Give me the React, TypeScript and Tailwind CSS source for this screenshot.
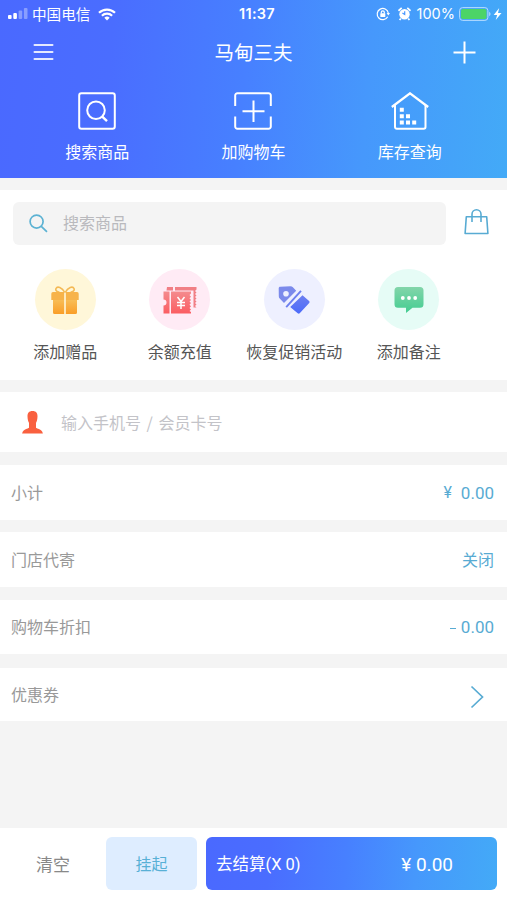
import React from "react";

// ---------------- types ----------------
type Entry = {
  label: string;
  icon: React.ReactNode;
};

type Promo = Entry & { bg: string };

type Row = {
  label: string;
  value: React.ReactNode;
  className: string;
};

// ---------------- header icons ----------------
const SearchBox = () => (
  <svg width="38" height="38" viewBox="0 0 38 38" fill="none" stroke="#fff" strokeWidth="2">
    <rect x="1.2" y="1.2" width="35.6" height="35.6" rx="2.2" />
    <circle cx="18" cy="18.2" r="8.8" />
    <path d="M24 24.4l5 4.8" strokeWidth="2.4" />
  </svg>
);

const AddBox = () => (
  <svg width="38" height="38" viewBox="0 0 38 38" fill="none" stroke="#fff" strokeWidth="2">
    <path d="M1.2 14V3.4a2.2 2.2 0 0 1 2.2-2.2h31.2a2.2 2.2 0 0 1 2.2 2.2V14" />
    <path d="M1.2 24.5v10.1a2.2 2.2 0 0 0 2.2 2.2h31.2a2.2 2.2 0 0 0 2.2-2.2V24.5" />
    <path d="M19.5 8.5v21.5M8.5 19.3h22" />
  </svg>
);

const House = () => (
  <svg width="38" height="38" viewBox="0 0 38 38" fill="none" stroke="#fff" strokeWidth="2">
    <path d="M.8 15L19 1.3 37.2 15" strokeWidth="2.2" />
    <path d="M4 13v22a1.8 1.8 0 0 0 1.8 1.8h26.9a1.8 1.8 0 0 0 1.8-1.8V13" />
    <path
      d="M8.8 15.8h4v4h-4zM8.8 22.2h4v4h-4zM15 22.2h4v4h-4zM8.8 28.6h4v4h-4zM15 28.6h4v4h-4zM21.2 28.6h4v4h-4z"
      fill="#fff"
      stroke="none"
    />
  </svg>
);

// ---------------- promo icons ----------------
const Gift = () => (
  <svg width="28" height="28" viewBox="0 0 28 28" fill="none">
    <defs>
      <linearGradient id="gift" x1="0" y1="0" x2="0" y2="1">
        <stop stopColor="#f8bd55" />
        <stop offset="1" stopColor="#fa9e28" />
      </linearGradient>
    </defs>
    <path d="M13.8 6.5C11 1 6.2-.2 5 2.5c-.9 2.2 1.5 3.5 3.5 3.7M14.2 6.5C17 1 21.8-.2 23 2.5c.9 2.2-1.5 3.5-3.5 3.7" stroke="#f4b955" strokeWidth="1.6" />
    <path d="M2 6h11.2v8H.3V7.7A1.7 1.7 0 0 1 2 6zM14.8 6H26a1.7 1.7 0 0 1 1.7 1.7V14H14.8z" fill="#f7b34a" />
    <path d="M2 14h11.2v14H3.5A1.5 1.5 0 0 1 2 26.5zM14.8 14H26v12.5a1.5 1.5 0 0 1-1.5 1.5h-9.7z" fill="url(#gift)" />
  </svg>
);

const Ticket = () => (
  <svg width="34" height="28" viewBox="0 0 34 28" fill="none">
    <defs>
      <linearGradient id="ticket" x1="0" y1="0" x2="0" y2="1">
        <stop stopColor="#f48b8e" />
        <stop offset="1" stopColor="#fb5d62" />
      </linearGradient>
    </defs>
    <path d="M4 1h6v3.5H3.5zM12 1h21.5v2.5L32 5l1.5 1.5L32 8l1.5 1.5L32 11l1.5 1.5L32 14l1.5 1.5L32 17l1.5 1.5L32 20l1.5 1.5h-3v-17H12z" fill="#f17f85" />
    <path d="M.5 5.5h6v22h-6v-8a3 3 0 0 0 0-6z" fill="url(#ticket)" />
    <path d="M8 5.5h20v2l-1.5 1.6 1.5 1.6-1.5 1.6 1.5 1.6-1.5 1.6 1.5 1.6-1.5 1.6 1.5 1.6-1.5 1.6 1.5 1.6-1.5 1.6 1.500 1v1.400H8z" fill="url(#ticket)" />
    <path d="M14.5 11l3.500 4.500 3.500-4.500M18 15.500V23M14 16.500h8M14 19.500h8" stroke="#fff" strokeWidth="1.500" />
  </svg>
);

const Tag = () => (
  <svg width="32" height="28" viewBox="0 0 32 28" fill="none">
    <defs>
      <linearGradient id="tag" x1="0" y1="0" x2="0" y2="1">
        <stop stopColor="#6c7ff0" />
        <stop offset="1" stopColor="#4c6bfa" />
      </linearGradient>
    </defs>
    <path
      d="M2.2.8L12.500.2c1 0 1.700.3 2.400 1L18.200 4.800 6 17 1.700 12.500C1 11.800.8 11 .8 10.200L.7 2.300c0-.9.6-1.500 1.500-1.500zM8 5a2.800 2.800 0 1 0 0 5.600A2.800 2.800 0 0 0 8 5z"
      fill="#7b8aeb"
      fillRule="evenodd"
    />
    <path d="M8.200 21.200L23 4.800" stroke="#6c7ff0" strokeWidth="1.900" />
    <path d="M24.500 9.200l6.600 5.800c.6.600.6 1.300.1 2L21.700 27.200c-.6.600-1.300.6-2 0l-7.500-6.200z" fill="url(#tag)" />
  </svg>
);

const Comment = () => (
  <svg width="30" height="28" viewBox="0 0 30 28" fill="none">
    <defs>
      <linearGradient id="comment" x1="0" y1="0" x2="0" y2="1">
        <stop stopColor="#83d5aa" />
        <stop offset="1" stopColor="#43cd91" />
      </linearGradient>
    </defs>
    <path d="M4 1h22a3.500 3.500 0 0 1 3.500 3.500v13.800a3.500 3.500 0 0 1-3.500 3.500h-7.500L12 27v-5.200H4a3.500 3.500 0 0 1-3.500-3.500V4.500A3.500 3.500 0 0 1 4 1z" fill="url(#comment)" />
    <circle cx="8.800" cy="12" r="1.900" fill="#fff" />
    <circle cx="15" cy="12" r="1.900" fill="#fff" />
    <circle cx="21.200" cy="12" r="1.900" fill="#fff" />
  </svg>
);

// ---------------- data ----------------
const entries: Entry[] = [
  { label: "搜索商品", icon: <SearchBox /> },
  { label: "加购物车", icon: <AddBox /> },
  { label: "库存查询", icon: <House /> },
];

const promos: Promo[] = [
  { label: "添加赠品", icon: <Gift />, bg: "bg-[#fff7d9]" },
  { label: "余额充值", icon: <Ticket />, bg: "bg-[#ffebf5]" },
  { label: "恢复促销活动", icon: <Tag />, bg: "bg-[#eef0ff]" },
  { label: "添加备注", icon: <Comment />, bg: "bg-[#e6fcf6]" },
];

const rows: Row[] = [
  {
    label: "小计",
    value: (
      <>
        <span className="mr-[9px] text-base">¥</span>0.00
      </>
    ),
    className: "mt-[13px] h-[55px]",
  },
  {
    label: "门店代寄",
    value: <span className="pt-[3px] text-base">关闭</span>,
    className: "mt-3 h-[55px]",
  },
  {
    label: "购物车折扣",
    value: (
      <>
        <span className="mr-[5px] mt-[2px] h-px w-[6px] bg-[#58abd3]" />0.00
      </>
    ),
    className: "mt-[13px] h-[54px]",
  },
  {
    label: "优惠券",
    value: (
      <svg className="mr-[10px] mt-1" width="14" height="24" viewBox="0 0 14 24" fill="none" stroke="#58abd3" strokeWidth="1.7">
        <path d="M1.5 1.5L12.500 12 1.500 22.500" />
      </svg>
    ),
    className: "mt-[14px] h-[53px]",
  },
];

// ---------------- sections ----------------
const StatusBar = () => (
  <div className="grid h-7 grid-cols-[1fr_auto_1fr] items-center pl-2 pr-1 text-white">
    <div className="flex items-center">
      <svg width="20" height="12" viewBox="0 0 20 12" fill="#fff">
        <rect x="0" y="7" width="3.6" height="4" rx="1" />
        <rect x="5.3" y="5" width="3.6" height="6" rx="1" />
        <rect x="10.6" y="2.5" width="3.6" height="8.5" rx="1" opacity=".35" />
        <rect x="15.9" y="0" width="3.6" height="11" rx="1" opacity=".35" />
      </svg>
      <span className="ml-1 text-[14.6px] leading-5">中国电信</span>
      <svg className="ml-2" width="18" height="13" viewBox="0 0 18 13" fill="none" stroke="#fff" strokeWidth="2.2">
        <path d="M1 4.800a11.500 11.500 0 0 1 16 0M3.900 7.800a7.300 7.300 0 0 1 10.200 0" />
        <path d="M9 12.500l-2.700-2.700a3.900 3.900 0 0 1 5.400 0z" fill="#fff" stroke="none" />
      </svg>
    </div>
    <span className="pl-[3px] font-[Inter] text-[14.5px] font-semibold leading-5 tracking-[0.3px]">11:37</span>
    <div className="flex items-center justify-end">
      <svg width="14" height="14" viewBox="0 0 14 14" fill="none" stroke="#fff" strokeWidth="1.2">
        <path d="M11.700 9.800A5.600 5.600 0 1 1 12.300 6" />
        <path d="M10.600 6h3.400l-1.700 2.400z" fill="#fff" stroke="none" />
        <rect x="4.300" y="6.300" width="5" height="3.600" rx=".5" fill="#fff" stroke="none" />
        <path d="M5.300 6.500V5.300a1.500 1.500 0 0 1 3 0v1.200" />
      </svg>
      <svg className="ml-2" width="13" height="14" viewBox="0 0 13 14" fill="#fff">
        <circle cx="6.500" cy="7.300" r="5.200" />
        <path d="M.5 3.800L3.700.9M12.500 3.800L9.300.9M2.800 11.500l-1.200 1.600M10.200 11.500l1.200 1.600" stroke="#fff" strokeWidth="1.700" />
        <path d="M6.700 4.200v3.300L4.400 6" fill="none" stroke="#4696ff" strokeWidth="1.200" />
      </svg>
      <span className="ml-[6px] font-[Inter] text-[14.5px] leading-5">100%</span>
      <svg className="ml-1" width="44" height="14" viewBox="0 0 44 14" fill="none">
        <rect x=".6" y=".6" width="28.300" height="12.800" rx="3" stroke="#b6dcff" strokeWidth="1" />
        <rect x="2" y="2" width="25.500" height="10" rx="1.800" fill="#4cd467" />
        <path d="M30.200 4.800c1.800.8 1.800 3.600 0 4.400z" fill="#b6dcff" />
        <path d="M40.200 1l-5.500 7h3.500l-1.500 5 5.800-7H39z" fill="#fff" />
      </svg>
    </div>
  </div>
);

const Header = () => (
  <header className="h-[178px] bg-[linear-gradient(95deg,#4a69ff_0%,#4a6dff_22%,#4780ff_48%,#4698fc_72%,#43aaf7_100%)] text-white">
    <StatusBar />
    <div className="flex h-12 items-center justify-between pl-8 pr-[31px]">
      <svg width="22" height="18" viewBox="0 0 22 18" stroke="#fff" strokeOpacity=".85" strokeWidth="2">
        <path d="M2.500 2h18M2.500 9h18M2.500 16h18" strokeLinecap="round" />
      </svg>
      <h1 className="text-[19.5px] leading-7">马甸三夫</h1>
      <svg width="23" height="23" viewBox="0 0 23 23" stroke="#fff" strokeWidth="2">
        <path d="M11.5.5v22M.5 11.5h22" />
      </svg>
    </div>
    <div className="grid grid-cols-3 px-[19px] pt-4">
      {entries.map(e => (
        <button key={e.label} className="flex flex-col items-center">
          {e.icon}
          <span className="mt-[9px] text-base leading-6">{e.label}</span>
        </button>
      ))}
    </div>
  </header>
);

// ---------------- page ----------------
const App: React.FC = () => {
  return (
    <div className="flex h-[900px] w-full flex-col bg-[#f4f4f4] font-['Noto_Sans_CJK_SC',sans-serif]">
      <Header />

      {/* search + promo actions */}
      <section className="mt-3 h-[190px] bg-white pt-3">
        <div className="flex h-[43px] items-center pl-[13px] pr-[18px]">
          <div className="flex h-full w-[433px] items-center rounded-md bg-[#f4f4f4] pl-4">
            <svg width="19" height="19" viewBox="0 0 19 19" fill="none" stroke="#5cb2d3" strokeWidth="1.7">
              <circle cx="7.6" cy="7.6" r="6.5" />
              <path d="M12.3 12.3l5.700 5.500" />
            </svg>
            <span className="ml-[15px] pb-[3px] text-base leading-6 text-[#b9b9bd]">搜索商品</span>
          </div>
          <svg className="mb-[5px] ml-auto" width="25" height="27" viewBox="0 0 25 27" fill="none" stroke="#58abd3" strokeWidth="1.6">
            <path d="M2.300 8.800h20.400L23.900 25.500H1.100z" strokeLinejoin="round" />
            <path d="M8 14V6.200a4.500 4.500 0 0 1 9 0V14" />
          </svg>
        </div>
        <div className="ml-2 mt-6 grid w-[458px] grid-cols-4">
          {promos.map(p => (
            <button key={p.label} className="flex flex-col items-center">
              <span className={`flex h-[61px] w-[61px] items-center justify-center rounded-full ${p.bg}`}>
                {p.icon}
              </span>
              <span className="mt-[9px] whitespace-nowrap text-base leading-6 text-[#555]">{p.label}</span>
            </button>
          ))}
        </div>
      </section>

      {/* member lookup */}
      <section className="mt-3 flex h-[60px] items-center bg-white pl-[22px]">
        <svg width="21" height="23" viewBox="0 0 21 23" fill="#f9603f">
          <path d="M10.5 0c3.700 0 5.100 2.200 5 5.500-.1 3.200-.8 5.400-2 7.300v3.400c.3.700 1.400 1.100 2.700 1.600 2.500.9 4.200 1.900 4.700 4.700H.1c.5-2.800 2.200-3.800 4.700-4.700 1.300-.5 2.400-.9 2.700-1.600v-3.400c-1.200-1.900-1.900-4.100-2-7.300C5.400 2.200 6.800 0 10.500 0z" />
          <path d="M7 12h7v6H7z" />
        </svg>
        <span className="ml-[18px] pb-px text-base leading-6 text-[#c3c3c8] [word-spacing:2px]">输入手机号 / 会员卡号</span>
      </section>

      {rows.map(r => (
        <section key={r.label} className={`flex items-center justify-between bg-white pl-[11px] pr-[13px] text-base ${r.className}`}>
          <span className="pb-[2px] leading-6 text-[#999]">{r.label}</span>
          <span className="flex items-center font-[Roboto,'Noto_Sans_CJK_SC',sans-serif] text-[17px] leading-6 text-[#58abd3]">
            {r.value}
          </span>
        </section>
      ))}

      {/* footer actions */}
      <footer className="mt-auto flex h-[72px] items-center bg-white pb-px pr-[10px]">
        <button className="w-[106px] text-[17px] leading-6 text-[#888]">清空</button>
        <button className="h-[53px] w-[91px] rounded-md bg-[#deedff] pb-px text-base text-[#58b0d6]">挂起</button>
        <button className="ml-[9px] flex h-[53px] flex-1 items-center justify-between rounded-md bg-[linear-gradient(95deg,#4a69ff_0%,#4a6dff_22%,#4780ff_48%,#4698fc_72%,#43aaf7_100%)] pl-[10px] pr-11 font-[Roboto,'Noto_Sans_CJK_SC',sans-serif] text-base text-white">
          <span className="pt-[3px] text-[16.5px]">去结算(X 0)</span>
          <span className="pt-[3px] text-[19px]">¥ 0.00</span>
        </button>
      </footer>
    </div>
  );
};

export default App;
